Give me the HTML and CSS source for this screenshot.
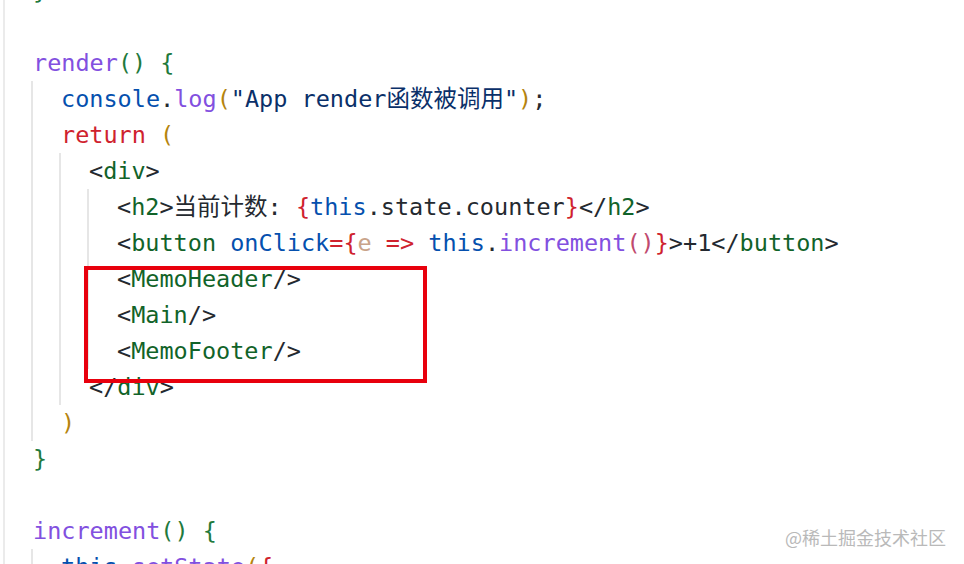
FILE: index.html
```html
<!DOCTYPE html>
<html lang="zh">
<head>
  <meta charset="UTF-8" />
  <meta name="viewport" content="width=device-width, initial-scale=1" />
  <title>App render</title>
  <link rel="stylesheet" href="styles.css">
</head>
<body>

<div class="screen">
  <div class="code">
    <div class="blk outer">
      <div class="ln"><span class="g">}</span></div>
      <div class="ln"></div>
      <div class="ln"><span class="fn">render</span><span class="g">() {</span></div>
      <div class="blk">
        <div class="ln"><span class="b">console</span>.<span class="fn">log</span><span class="o">(</span><span class="s">"App render函数被调用"</span><span class="o">)</span>;</div>
        <div class="ln"><span class="kw">return</span> <span class="o">(</span></div>
        <div class="blk">
          <div class="ln">&lt;<span class="tg">div</span>&gt;</div>
          <div class="blk">
            <div class="ln">&lt;<span class="tg">h2</span>&gt;当前计数: <span class="r">{</span><span class="b">this</span>.state.counter<span class="r">}</span>&lt;/<span class="tg">h2</span>&gt;</div>
            <div class="ln">&lt;<span class="tg">button</span> <span class="b">onClick</span><span class="r">={</span><span class="pm">e</span> <span class="r">=&gt;</span> <span class="b">this</span>.<span class="fn">increment</span><span class="pk">()</span><span class="r">}</span>&gt;+1&lt;/<span class="tg">button</span>&gt;</div>
            <div class="ln">&lt;<span class="tg">MemoHeader</span>/&gt;</div>
            <div class="ln">&lt;<span class="tg">Main</span>/&gt;</div>
            <div class="ln">&lt;<span class="tg">MemoFooter</span>/&gt;</div>
          </div>
          <div class="ln">&lt;/<span class="tg">div</span>&gt;</div>
        </div>
        <div class="ln"><span class="o">)</span></div>
      </div>
      <div class="ln"><span class="g">}</span></div>
      <div class="ln"></div>
      <div class="ln"><span class="fn">increment</span><span class="g">() {</span></div>
      <div class="blk">
        <div class="ln"><span class="b">this</span>.<span class="fn">setState</span><span class="o">(</span><span class="r">{</span></div>
      </div>
    </div>
  </div>

  <div class="highlight"></div>
  <div class="watermark">@稀土掘金技术社区</div>
</div>

</body>
</html>
```

FILE: styles.css
```css
html, body {
  margin: 0;
  padding: 0;
  background: #ffffff;
}
.screen {
  position: relative;
  width: 964px;
  height: 564px;
  overflow: hidden;
  background: #ffffff;
}
.code {
  margin-top: -27px;
  font-family: "DejaVu Sans Mono", "Noto Sans CJK SC", monospace;
  font-size: 23.5px;
  line-height: 36px;
  color: #24292f;
}
.blk {
  margin-left: 26px;
  border-left: 2px solid #e6e6e6;
}
.blk.outer {
  margin-left: 3px;
  border-left-color: #ebebeb;
}
.ln {
  height: 36px;
  padding-left: 28px;
  white-space: pre;
}

/* syntax colours */
.fn { color: #8250df; }
.g { color: #1f7a3d; }
.b { color: #0550ae; }
.o { color: #b5840e; }
.s { color: #0a3069; }
.kw { color: #cf222e; }
.r { color: #cf222e; }
.tg { color: #116329; }
.pm { color: #c9a38a; }
.pk { color: #bf4a6e; }

.highlight {
  position: absolute;
  left: 84px;
  top: 266px;
  width: 335px;
  height: 109px;
  border: 4px solid #e8000d;
}
.watermark {
  position: absolute;
  right: 18px;
  top: 525px;
  font-family: "Noto Sans CJK SC", "Noto Sans", sans-serif;
  font-size: 18px;
  line-height: 24px;
  color: #b9b9b9;
}
```
